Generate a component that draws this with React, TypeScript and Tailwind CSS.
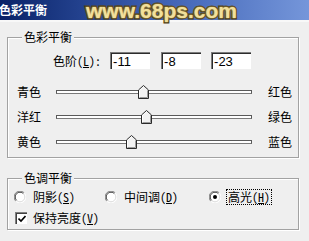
import React from "react";

function Slider({ value }: { value: number }) {
  const pos = 98 + value * 0.98;
  return (
    <div className="relative w-[196px] h-[4px] border border-[#5a5a5a] border-b-[#7a7a7a] bg-white">
      <svg
        className="absolute top-[-6px]"
        style={{ left: `${Math.round(pos - 6)}px` }}
        width="11"
        height="14"
        viewBox="0 0 11 14"
      >
        <path d="M5.5 0.5 L10.5 5 V13.5 H0.5 V5 Z" fill="#f2f2f2" stroke="#2a2a2a" strokeWidth="1" />
        <path d="M1.5 12.5 V5.4 L5.5 1.8" fill="none" stroke="#ffffff" strokeWidth="1" />
        <path d="M9.5 5.4 V12.5 H1.5" fill="none" stroke="#9a9a9a" strokeWidth="1" />
      </svg>
    </div>
  );
}

function NumBox({ v }: { v: string }) {
  return (
    <div className="w-[40px] h-[17px] border-t border-l border-[#7c7c7c] border-b-white border-r-white">
      <div className="w-full h-full border-t border-l border-[#2c2c2c] border-b-[#e2e2e2] border-r-[#e2e2e2] bg-white pl-[1px] flex items-center font-['Liberation_Sans',sans-serif] text-[13px] leading-[13px]">
        {v}
      </div>
    </div>
  );
}

function SliderRow({ l, r, v }: { l: string; r: string; v: number }) {
  return (
    <div className="h-[25px] flex items-center pl-[9px]">
      <span className="w-[24px]">{l}</span>
      <div className="ml-[15px]">
        <Slider value={v} />
      </div>
      <span className="ml-[16px]">{r}</span>
    </div>
  );
}

function Radio({ checked }: { checked?: boolean }) {
  return (
    <svg width="12" height="12" viewBox="0 0 12 12">
      <circle cx="6" cy="6" r="5.5" fill="#ffffff" />
      <path d="M1.8 10.2 A5.5 5.5 0 0 1 10.2 1.8" fill="none" stroke="#808080" strokeWidth="1" />
      <path d="M2.6 9.4 A4.5 4.5 0 0 1 9.4 2.6" fill="none" stroke="#404040" strokeWidth="1" />
      <path d="M10.2 1.8 A5.5 5.5 0 0 1 1.8 10.2" fill="none" stroke="#ffffff" strokeWidth="1" />
      <path d="M9.4 2.6 A4.5 4.5 0 0 1 2.6 9.4" fill="none" stroke="#dcdcdc" strokeWidth="1" />
      {checked && <circle cx="6" cy="6" r="2" fill="#000000" />}
    </svg>
  );
}

function U({ c }: { c: string }) {
  return <span className="underline underline-offset-[1px]">{c}</span>;
}

export default function App() {
  return (
    <div className="relative w-[309px] h-[241px] overflow-hidden bg-[#efefef] text-black text-[12px] leading-[14px] font-['Noto_Sans_Mono_CJK_SC','Noto_Sans_CJK_SC',sans-serif]">
      <div className="h-[20px] bg-gradient-to-r from-[#0a2268] via-[#3c5fb2] to-[#7596da] flex items-center">
        <span className="ml-[-1px] text-white font-bold text-[12px] leading-[14px]">色彩平衡</span>
      </div>
      <div className="h-[2px] bg-[#f8f8f8]" />

      <div className="absolute left-[86px] top-[0px] text-[21px] leading-[21px] font-bold font-['Liberation_Sans',sans-serif] text-[#f2e09a] [-webkit-text-stroke:3px_#4e3c10] [paint-order:stroke_fill] [text-shadow:0_0_2px_#d8c890]">
        www.68ps.com
      </div>

      {/* Group 1 */}
      <div className="relative ml-[7px] mt-[15px] w-[292px] h-[121px] border border-[#a2a2a2] shadow-[1px_1px_0_#ffffff,inset_1px_1px_0_#ffffff]">
        <span className="absolute left-[14px] top-[-8px] px-[2px] bg-[#efefef]">色彩平衡</span>
        <div className="mt-[14px] flex items-center pl-[45px] h-[17px]">
          <span>
            色阶(<U c="L" />):
          </span>
          <div className="ml-[9px]">
            <NumBox v="-11" />
          </div>
          <div className="ml-[11px]">
            <NumBox v="-8" />
          </div>
          <div className="ml-[10px]">
            <NumBox v="-23" />
          </div>
        </div>
        <div className="mt-[10px]">
          <SliderRow l="青色" r="红色" v={-11} />
          <SliderRow l="洋红" r="绿色" v={-8} />
          <SliderRow l="黄色" r="蓝色" v={-23} />
        </div>
      </div>

      {/* Group 2 */}
      <div className="relative ml-[7px] mt-[20px] w-[292px] h-[52px] border border-[#a2a2a2] shadow-[1px_1px_0_#ffffff,inset_1px_1px_0_#ffffff]">
        <span className="absolute left-[14px] top-[-8px] px-[2px] bg-[#efefef]">色调平衡</span>
        <div className="mt-[10px] h-[16px] flex items-center pl-[6px]">
          <div className="w-[91px] flex items-center">
            <Radio />
            <span className="ml-[7px]">
              阴影(<U c="S" />)
            </span>
          </div>
          <div className="w-[104px] flex items-center">
            <Radio />
            <span className="ml-[7px]">
              中间调(<U c="D" />)
            </span>
          </div>
          <div className="flex items-center">
            <Radio checked />
            <span className="ml-[5px] px-[1px] h-[16px] flex items-center border border-dotted border-black">
              高光(<U c="H" />)
            </span>
          </div>
        </div>
        <div className="mt-[6px] h-[14px] flex items-center pl-[7px]">
          <div className="w-[12px] h-[12px] border-t border-l border-[#808080] border-b-white border-r-white">
            <div className="w-full h-full border-t border-l border-[#404040] border-b-[#dcdcdc] border-r-[#dcdcdc] bg-white flex items-center justify-center">
              <svg width="8" height="8" viewBox="0 0 8 8">
                <path d="M0.5 3.5 L3 6 L7.5 1" fill="none" stroke="#000" strokeWidth="1.6" />
              </svg>
            </div>
          </div>
          <span className="ml-[6px]">
            保持亮度(<U c="V" />)
          </span>
        </div>
      </div>
    </div>
  );
}
